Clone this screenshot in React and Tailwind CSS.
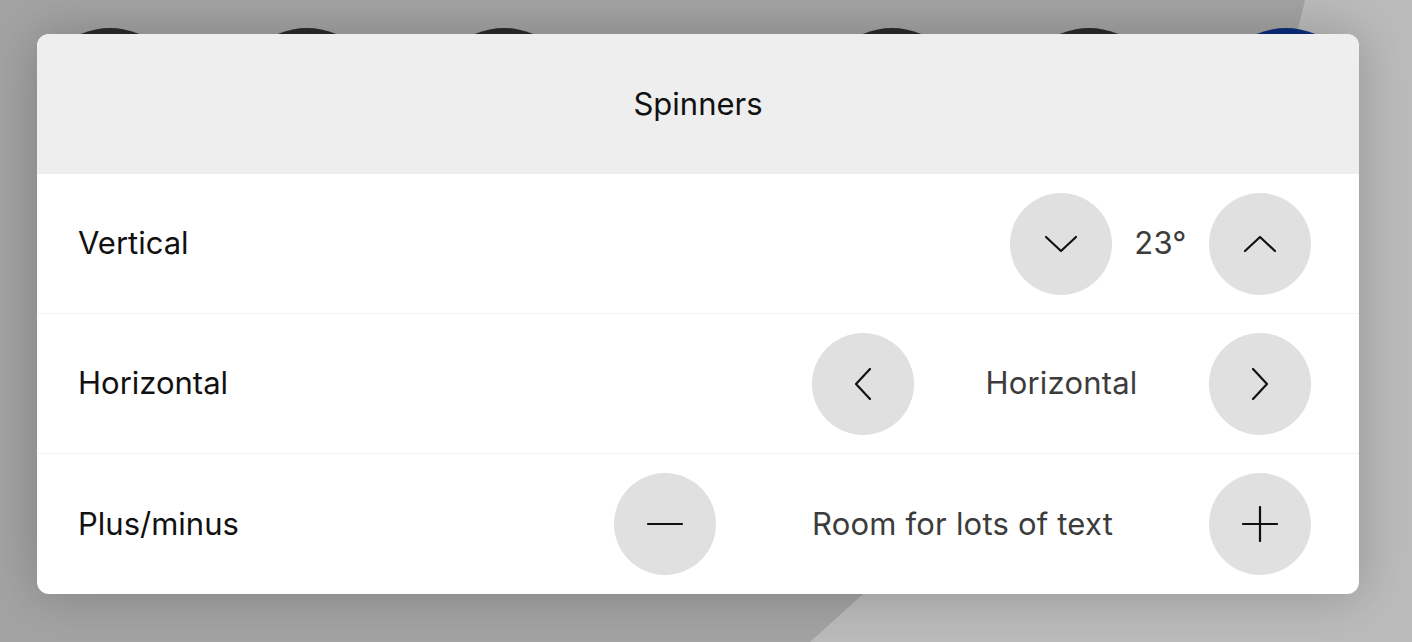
import React from 'react';

const Chevron = ({ dir }) => {
  const paths = {
    down: 'M2 2 L17 16 L32 2',
    up: 'M2 16 L17 2 L32 16',
    left: 'M16 2 L2 17 L16 32',
    right: 'M2 2 L16 17 L2 32',
  };
  const box = dir === 'up' || dir === 'down' ? '0 0 34 18' : '0 0 18 34';
  const size = dir === 'up' || dir === 'down' ? 'w-[34px] h-[18px]' : 'w-[18px] h-[34px]';
  return (
    <svg viewBox={box} className={size} fill="none" stroke="#111" strokeWidth="2.2" strokeLinecap="round" strokeLinejoin="round">
      <path d={paths[dir]} />
    </svg>
  );
};

const PlusMinus = ({ plus }) => (
  <svg viewBox="0 0 36 36" className="w-[36px] h-[36px]" fill="none" stroke="#111" strokeWidth="2.2" strokeLinecap="round">
    <path d="M1 18 H35" />
    {plus && <path d="M18 1 V35" />}
  </svg>
);

const RoundButton = ({ children }) => (
  <button className="w-[102px] h-[102px] rounded-full bg-[#e0e0e0] flex items-center justify-center shrink-0">
    {children}
  </button>
);

const Row = ({ label, left, right, value, valueWidth, last }) => (
  <div className={`h-[140px] flex items-center pl-[41px] pr-[48px] ${last ? '' : 'border-b border-[#f2f2f2]'}`}>
    <div className="text-[31px] text-[#111] flex-1">{label}</div>
    <RoundButton>{left}</RoundButton>
    <div className="text-[31px] text-[#3c3c3c] text-center tracking-[0.2px]" style={{ width: valueWidth }}>{value}</div>
    <RoundButton>{right}</RoundButton>
  </div>
);

export default function App() {
  const dots = [110, 307, 504, 892, 1089];
  return (
    <div className="relative w-[1412px] h-[642px] overflow-hidden bg-[#a3a3a3]" style={{ fontFamily: 'Inter, "Noto Sans", sans-serif' }}>
      <svg className="absolute inset-0" width="1412" height="642">
        <path d="M810 642 C 1000 470, 1250 250, 1305 0 L1412 0 L1412 642 Z" fill="#bbbbbb" />
      </svg>
      {dots.map((x) => (
        <div key={x} className="absolute top-[28px] w-[146px] h-[146px] rounded-full bg-[#2a2a2a]" style={{ left: x - 73 }} />
      ))}
      <div className="absolute top-[28px] left-[1213px] w-[146px] h-[146px] rounded-full bg-[#0b2d7e]" />

      <div className="relative pt-[34px] pl-[37px]">
        <div className="w-[1322px] rounded-[12px] overflow-hidden bg-white shadow-[0_0_50px_rgba(0,0,0,0.22)]">
          <div className="h-[140px] bg-[#eeeeee] flex items-center justify-center text-[31px] text-[#111]">Spinners</div>
          <Row label="Vertical" left={<Chevron dir="down" />} right={<Chevron dir="up" />} value="23°" valueWidth={97} />
          <Row label="Horizontal" left={<Chevron dir="left" />} right={<Chevron dir="right" />} value="Horizontal" valueWidth={295} />
          <Row label="Plus/minus" left={<PlusMinus />} right={<PlusMinus plus />} value="Room for lots of text" valueWidth={493} last />
        </div>
      </div>
    </div>
  );
}
